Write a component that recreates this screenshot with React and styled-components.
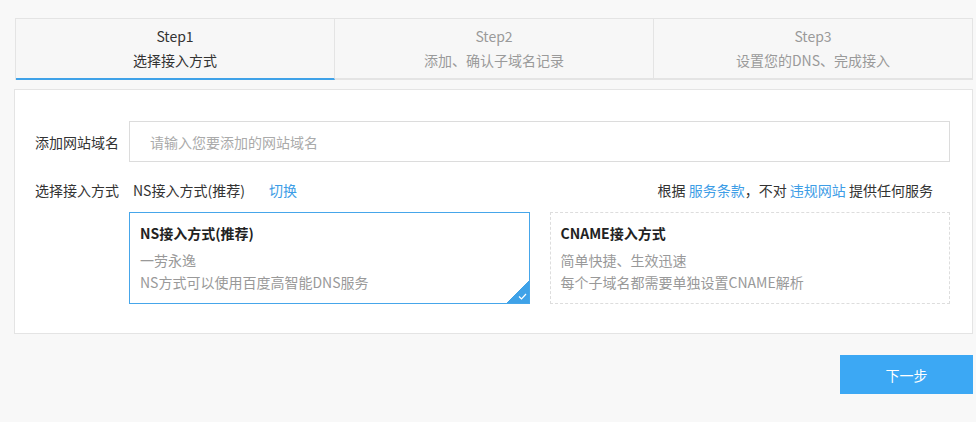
import React from 'react'
import styled, { createGlobalStyle } from 'styled-components'

const Global = createGlobalStyle`
  body {
    margin: 0;
    background: #f8f8f8;
    font-family: "Noto Sans CJK SC", "Noto Sans", sans-serif;
    font-size: 14px;
    color: #333;
  }
`

const Page = styled.div`
  width: 976px;
  height: 422px;
  box-sizing: border-box;
  padding: 18px 3px 0 14px;
`

const Steps = styled.div`
  display: flex;
  margin-left: 1px;
  border: 1px solid #e4e4e4;
  border-bottom: none;
  background: #f7f7f7;
`

const Step = styled.div`
  flex: 1;
  height: 61px;
  box-sizing: border-box;
  display: flex;
  flex-direction: column;
  align-items: center;
  padding-top: 7px;
  border-right: 1px solid #e4e4e4;
  border-bottom: 2px solid ${(p) => (p.active ? '#3fa2e8' : '#e4e4e4')};
  color: ${(p) => (p.active ? '#333' : '#9a9a9a')};
  &:last-child {
    border-right: none;
  }
`

const StepTitle = styled.div`
  font-size: 14px;
  line-height: 20px;
`

const StepSub = styled.div`
  font-size: 14px;
  line-height: 20px;
  margin-top: 4px;
`

const Card = styled.div`
  margin-top: 9px;
  height: 245px;
  box-sizing: border-box;
  background: #fff;
  border: 1px solid #e4e4e4;
  padding: 31px 22px 0 20px;
`

const Row = styled.div`
  display: flex;
  align-items: center;
  margin-top: ${(p) => p.mt || 0}px;
`

const Label = styled.div`
  width: 94px;
  flex-shrink: 0;
  color: #333;
`

const Input = styled.input`
  flex: 1;
  height: 41px;
  box-sizing: border-box;
  border: 1px solid #dcdcdc;
  padding: 0 20px;
  font-family: inherit;
  font-size: 14px;
  outline: none;
  &::placeholder {
    color: #aaa;
  }
`

const Mode = styled.span`
  margin-left: 4px;
  color: #333;
`

const Link = styled.a`
  color: #3d9de6;
  text-decoration: none;
  margin: ${(p) => p.m || '0'};
`

const Terms = styled.div`
  margin-left: auto;
  margin-right: 17px;
  color: #333;
`

const Options = styled.div`
  display: flex;
  gap: 20px;
  margin-left: 94px;
  margin-top: 12px;
`

const Option = styled.div`
  position: relative;
  flex: 1;
  height: 92px;
  box-sizing: border-box;
  padding: 9px 10px 0;
  border: 1px ${(p) => (p.selected ? 'solid #46a6ea' : 'dashed #dddddd')};
  overflow: hidden;
`

const OptTitle = styled.div`
  font-weight: bold;
  color: #222;
  line-height: 22px;
  margin-bottom: 5px;
`

const OptLine = styled.div`
  color: #999;
  line-height: 22px;
`

const Corner = styled.div`
  position: absolute;
  right: 0;
  bottom: 0;
  width: 22px;
  height: 22px;
  background: linear-gradient(135deg, transparent 50%, #3fa2e8 50%);
  svg {
    position: absolute;
    right: 2px;
    bottom: 3px;
  }
`

const Footer = styled.div`
  display: flex;
  justify-content: flex-end;
  margin-top: 21px;
`

const NextButton = styled.button`
  width: 133px;
  height: 39px;
  border: none;
  background: #3ca8f4;
  color: #fff;
  font-family: inherit;
  font-size: 14px;
`

export default function App() {
  return (
    <Page>
      <Global />
      <Steps>
        <Step active>
          <StepTitle>Step1</StepTitle>
          <StepSub>选择接入方式</StepSub>
        </Step>
        <Step>
          <StepTitle>Step2</StepTitle>
          <StepSub>添加、确认子域名记录</StepSub>
        </Step>
        <Step>
          <StepTitle>Step3</StepTitle>
          <StepSub>设置您的DNS、完成接入</StepSub>
        </Step>
      </Steps>
      <Card>
        <Row>
          <Label>添加网站域名</Label>
          <Input placeholder="请输入您要添加的网站域名" />
        </Row>
        <Row mt={18}>
          <Label>选择接入方式</Label>
          <Mode>NS接入方式(推荐)</Mode>
          <Link m="0 0 0 24px">切换</Link>
          <Terms>
            根据 <Link>服务条款</Link>，不对 <Link>违规网站</Link> 提供任何服务
          </Terms>
        </Row>
        <Options>
          <Option selected>
            <OptTitle>NS接入方式(推荐)</OptTitle>
            <OptLine>一劳永逸</OptLine>
            <OptLine>NS方式可以使用百度高智能DNS服务</OptLine>
            <Corner>
              <svg width="9" height="7" viewBox="0 0 9 7">
                <path d="M1 3.5 L3.5 6 L8 1" fill="none" stroke="#fff" strokeWidth="1.2" />
              </svg>
            </Corner>
          </Option>
          <Option>
            <OptTitle>CNAME接入方式</OptTitle>
            <OptLine>简单快捷、生效迅速</OptLine>
            <OptLine>每个子域名都需要单独设置CNAME解析</OptLine>
          </Option>
        </Options>
      </Card>
      <Footer>
        <NextButton>下一步</NextButton>
      </Footer>
    </Page>
  )
}
